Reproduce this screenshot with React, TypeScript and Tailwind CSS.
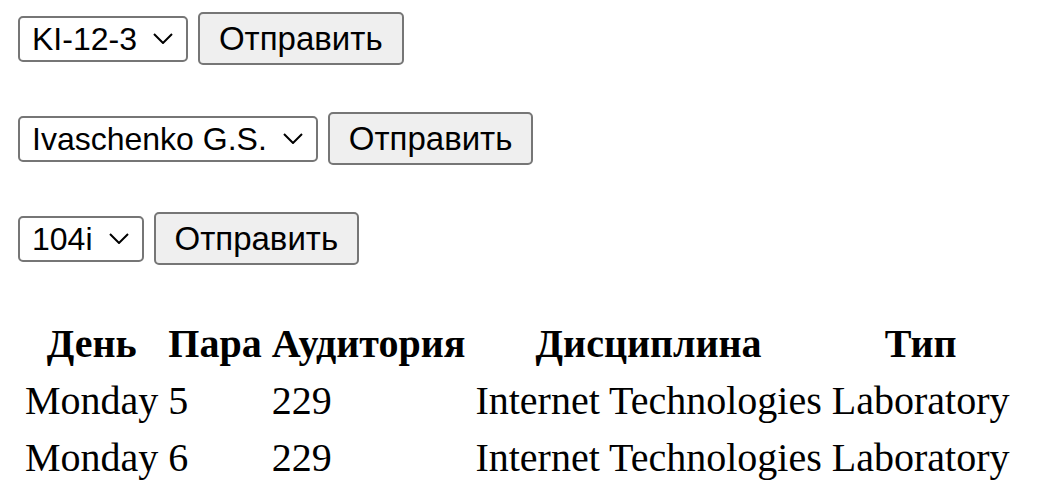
import React from "react";

function Chevron() {
  return (
    <svg width="20" height="11" viewBox="0 0 20 11" className="ml-[16px] shrink-0">
      <path d="M1 1 L10 10 L19 1" fill="none" stroke="#000" strokeWidth="2" />
    </svg>
  );
}

function Row({ label, first }: { label: string; first?: boolean }) {
  return (
    <div className={`flex items-center ${first ? "" : "mt-[47px]"}`}>
      <div className="ml-[2px] flex h-[46px] items-center rounded-[5px] border-2 border-[#767676] bg-white pl-[12px] pr-[13px] text-[32px] text-black">
        <span className="leading-none">{label}</span>
        <Chevron />
      </div>
      <button className="ml-[10px] flex h-[53px] items-center rounded-[5px] border-2 border-[#767676] bg-[#efefef] px-[19px] text-[33px] text-black">
        Отправить
      </button>
    </div>
  );
}

export default function App() {
  return (
    <div
      className="min-h-[503px] bg-white p-[16px] pt-[12px] text-black"
      style={{ fontFamily: "Arial, 'Liberation Sans', sans-serif" }}
    >
      <Row label="KI-12-3" first />
      <Row label="Ivaschenko G.S." />
      <Row label="104i" />
      <table
        className="ml-[2px] mt-[48px] border-separate border-spacing-[4px] text-[40px] leading-[49px]"
        style={{ fontFamily: "'Liberation Serif', 'Times New Roman', serif" }}
      >
        <thead>
          <tr>
            <th className="px-[3px] py-[2px] font-bold">День</th>
            <th className="px-[3px] py-[2px] font-bold">Пара</th>
            <th className="px-[3px] py-[2px] font-bold">Аудитория</th>
            <th className="px-[3px] py-[2px] font-bold">Дисциплина</th>
            <th className="px-[3px] py-[2px] font-bold">Тип</th>
          </tr>
        </thead>
        <tbody>
          {["5", "6"].map((p) => (
            <tr key={p}>
              <td className="px-[3px] py-[2px]">Monday</td>
              <td className="px-[3px] py-[2px]">{p}</td>
              <td className="px-[3px] py-[2px]">229</td>
              <td className="px-[3px] py-[2px]">Internet Technologies</td>
              <td className="px-[3px] py-[2px]">Laboratory</td>
            </tr>
          ))}
        </tbody>
      </table>
    </div>
  );
}
